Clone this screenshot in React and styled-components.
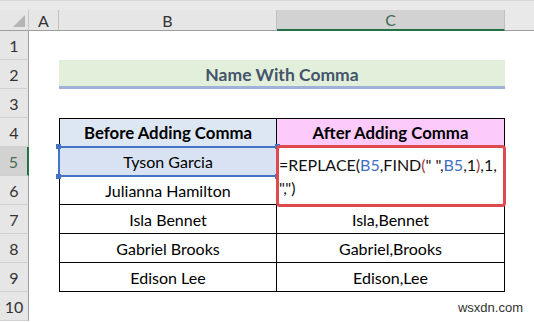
import React from 'react';
import styled, { createGlobalStyle, css } from 'styled-components';

const GlobalStyle = createGlobalStyle`
  html, body {
    margin: 0;
    padding: 0;
    background: #ffffff;
    overflow: hidden;
  }
`;

const Window = styled.div`
  position: relative;
  width: 534px;
  height: 322px;
  overflow: hidden;
  background: #ffffff;
  font-family: 'Lato', 'Liberation Sans', sans-serif;
  color: #000;
`;

const TopStrip = styled.div`
  height: 10px;
  background: #e9e9e9;
  border-top: 1px solid #d6d6d6;
  box-sizing: border-box;
`;

const Sheet = styled.div`
  display: grid;
  grid-template-columns: 29px 30px 218px 228px 1fr;
  grid-template-rows: 21px repeat(10, 29px);
`;

const Corner = styled.div`
  background: #e6e6e6;
  border-right: 1px solid #c6c6c6;
  border-bottom: 1px solid #9e9e9e;
  box-sizing: border-box;
  display: flex;
  align-items: flex-end;
  justify-content: flex-end;
  padding: 0 3px 3px 0;
`;

const ColHeader = styled.div`
  background: ${p => (p.$selected ? '#d2d2d2' : '#e6e6e6')};
  border-right: 1px solid #c0c0c0;
  border-bottom: ${p => (p.$selected ? '2px solid #217346' : '1px solid #9e9e9e')};
  box-sizing: border-box;
  display: flex;
  align-items: center;
  justify-content: center;
  font-size: 16px;
  color: ${p => (p.$selected ? '#3e6a50' : '#333')};
`;

const ColFiller = styled.div`
  background: #e9e9e9;
  border-bottom: 1px solid #9e9e9e;
  box-sizing: border-box;
`;

const RowHeader = styled.div`
  background: ${p => (p.$selected ? '#d2d2d2' : '#e6e6e6')};
  border-right: ${p => (p.$selected ? '2px solid #217346' : '1px solid #9e9e9e')};
  border-bottom: 1px solid #d0d0d0;
  box-sizing: border-box;
  display: flex;
  align-items: center;
  justify-content: center;
  font-size: 16px;
  color: ${p => (p.$selected ? '#4b6b55' : '#333')};
`;

const Blank = styled.div``;

const Title = styled.div`
  grid-column: span 2;
  background: #e2efda;
  border-bottom: 3px solid #9fb1d8;
  box-sizing: border-box;
  display: flex;
  align-items: center;
  justify-content: center;
  padding-top: 2px;
  font-size: 17.5px;
  font-weight: 700;
  color: #44546a;
`;

const Cell = styled.div`
  box-sizing: border-box;
  display: flex;
  align-items: center;
  justify-content: center;
  font-size: 16px;
  border-right: 1px solid #000;
  border-bottom: 1px solid #000;
  background: ${p => p.$fill || '#ffffff'};
  ${p => p.$left && css`border-left: 1px solid #000;`}
  ${p => p.$top && css`border-top: 1px solid #000;`}
  ${p => p.$head && css`font-weight: 700; font-size: 16.8px;`}
`;

const RefBox = styled.div`
  position: absolute;
  left: 58px;
  top: 146px;
  width: 220px;
  height: 31px;
  box-sizing: border-box;
  border: 2px solid #4472c4;
`;

const Handle = styled.span`
  position: absolute;
  width: 5px;
  height: 5px;
  background: #4472c4;
  ${p => (p.$top ? 'top: -4px;' : 'bottom: -4px;')}
  ${p => (p.$left ? 'left: -4px;' : 'right: -4px;')}
`;

const Editor = styled.div`
  position: absolute;
  left: 276px;
  top: 145px;
  width: 230px;
  height: 62px;
  box-sizing: border-box;
  border: 3px solid #dd4b51;
  border-radius: 4px;
  background: #ffffff;
  padding: 5px 0 0 0;
  font-size: 16px;
  line-height: 23px;
  white-space: pre-wrap;
  color: #111;
`;

const Ref = styled.span`
  color: #3f6fc1;
`;

const Paren = styled.span`
  color: #a43d3a;
`;

const Watermark = styled.div`
  position: absolute;
  right: 11px;
  bottom: 7px;
  font-family: 'Liberation Sans', Arial, sans-serif;
  font-size: 13px;
  color: #333;
`;

const rows = [
  { n: 1 },
  { n: 2, title: 'Name With Comma' },
  { n: 3 },
  { n: 4, head: ['Before Adding Comma', 'After Adding Comma'] },
  { n: 5, data: ['Tyson Garcia', ''], selected: true },
  { n: 6, data: ['Julianna Hamilton', ''] },
  { n: 7, data: ['Isla Bennet', 'Isla,Bennet'] },
  { n: 8, data: ['Gabriel Brooks', 'Gabriel,Brooks'] },
  { n: 9, data: ['Edison Lee', 'Edison,Lee'] },
  { n: 10 },
];

const CornerMark = () => (
  <svg width="12" height="12" viewBox="0 0 12 12">
    <polygon points="12,0 12,12 0,12" fill="#b5b5b5" />
  </svg>
);

const renderRow = (r) => {
  const cells = [<RowHeader key="h" $selected={r.selected}>{r.n}</RowHeader>, <Blank key="a" />];
  if (r.title) {
    cells.push(<Title key="t">{r.title}</Title>);
  } else if (r.head) {
    cells.push(
      <Cell key="b" $head $left $top $fill="#dde7f3">{r.head[0]}</Cell>,
      <Cell key="c" $head $top $fill="#fccbfb">{r.head[1]}</Cell>
    );
  } else if (r.data) {
    cells.push(
      <Cell key="b" $left $fill={r.selected ? '#d9e2f2' : undefined}>{r.data[0]}</Cell>,
      <Cell key="c">{r.data[1]}</Cell>
    );
  } else {
    cells.push(<Blank key="b" />, <Blank key="c" />);
  }
  cells.push(<Blank key="f" />);
  return cells;
};

export default function App() {
  return (
    <>
      <GlobalStyle />
      <Window>
        <TopStrip />
        <Sheet>
          <Corner><CornerMark /></Corner>
          <ColHeader>A</ColHeader>
          <ColHeader>B</ColHeader>
          <ColHeader $selected>C</ColHeader>
          <ColFiller />
          {rows.map(renderRow)}
        </Sheet>
        <RefBox>
          <Handle $top $left />
          <Handle $top />
          <Handle $left />
          <Handle />
        </RefBox>
        <Editor>
          =REPLACE(<Ref>B5</Ref>,FIND<Paren>(</Paren>" ",<Ref>B5</Ref>,1<Paren>)</Paren>,1,{'\n'}",")
        </Editor>
        <Watermark>wsxdn.com</Watermark>
      </Window>
    </>
  );
}
